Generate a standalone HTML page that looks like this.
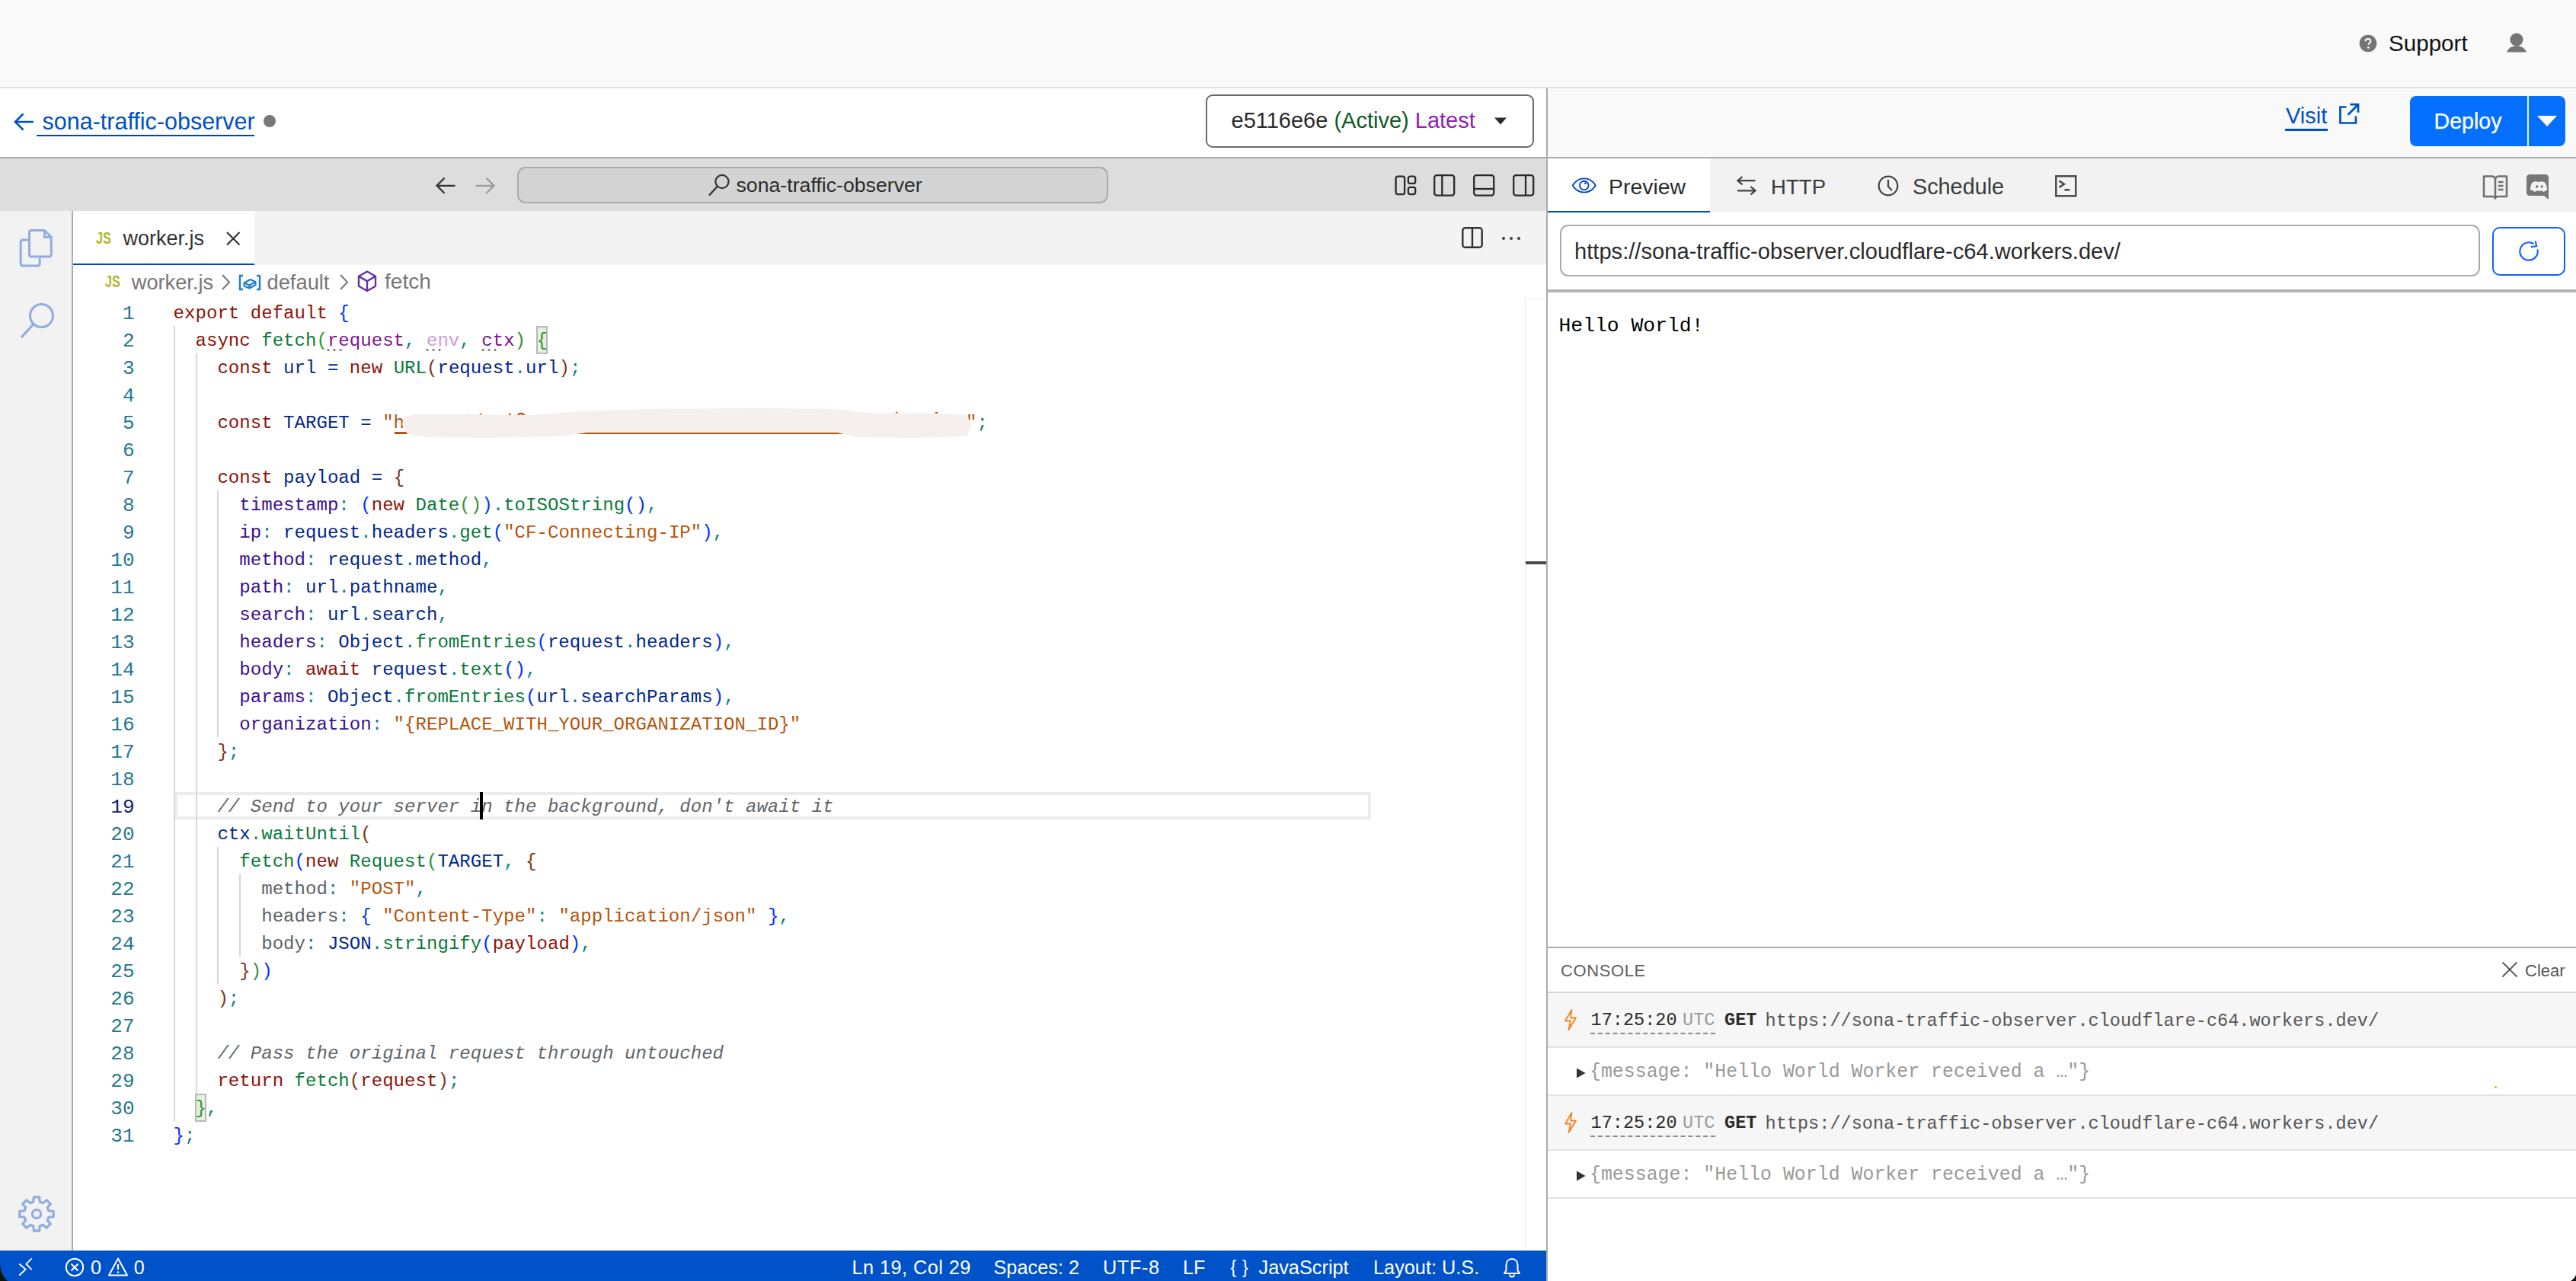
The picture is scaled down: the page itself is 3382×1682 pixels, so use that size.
<!DOCTYPE html>
<html><head><meta charset="utf-8"><title>Worker editor</title><style>
*{margin:0;padding:0;box-sizing:border-box}
html,body{width:3382px;height:1682px;overflow:hidden;background:#fff;font-family:"Liberation Sans",sans-serif;color:#2b2b2b}
.a{position:absolute}
.t1{position:absolute;white-space:pre}
svg{position:absolute;overflow:visible}
/* code */
.code{position:absolute;left:0;top:0;font-family:"Liberation Mono",monospace;font-size:24.08px;line-height:36px;white-space:pre}
.ln{position:absolute;width:60px;text-align:right;left:116.5px;font-family:"Liberation Mono",monospace;font-size:26px;line-height:36px;color:#237893}
.cl{position:absolute;left:227.6px;font-family:"Liberation Mono",monospace;font-size:24.08px;line-height:36px;white-space:pre;color:#00288c}
.k{color:#8c1408}.v{color:#00288c}.f{color:#0b7a3a}.pa{color:#7b158f}.pu{color:#cf9ad9}
.pr{color:#3b0f8f}.g{color:#5a6366}.s{color:#b3560c}.c{color:#5f6669;font-style:italic}
.p{color:#098186}.b1{color:#0431fa}.b2{color:#319331}.b3{color:#7b3814}
.guide{position:absolute;width:2px;background:#d8d8d8}
</style></head><body>
<div class="a" style="left:0px;top:0px;width:3382px;height:114px;background:#f9f9f9;"></div>
<div class="a" style="left:0px;top:114px;width:3382px;height:2px;background:#e0e0e0;"></div>
<svg style="left:3097px;top:45px;" width="24" height="24" viewBox="0 0 24 24"><circle cx="12" cy="12" r="11.3" fill="#757575"/><path d="M8.6 9.3c0-2 1.5-3.3 3.4-3.3s3.4 1.2 3.4 3c0 2.4-3 2.5-3 4.8" fill="none" stroke="#fff" stroke-width="2"/><circle cx="12.3" cy="17.4" r="1.3" fill="#fff"/></svg>
<div class="t1" style="left:3136.0px;top:41.9px;font-size:29.6px;line-height:29.6px;color:#111;font-family:'Liberation Sans',sans-serif;">Support</div>
<svg style="left:3290px;top:43px;" width="28" height="27" viewBox="0 0 28 27"><circle cx="14" cy="9" r="8.6" fill="#757575"/><path d="M1 25.6 C3 20 8 17.2 14 17.2 C20 17.2 25 20 27 25.6 Z" fill="#757575"/></svg>
<div class="a" style="left:0px;top:116px;width:2030px;height:90px;background:#ffffff;"></div>
<div class="a" style="left:2032px;top:116px;width:1350px;height:90px;background:#f9f9f9;"></div>
<svg style="left:17px;top:147px;" width="30" height="26" viewBox="0 0 30 26"><path d="M27 13H3.5M13.5 2.5L3 13l10.5 10.5" fill="none" stroke="#0051c3" stroke-width="2.6"/></svg>
<div class="t1" style="left:55.5px;top:144.2px;font-size:30.5px;line-height:30.5px;color:#0051c3;font-family:'Liberation Sans',sans-serif;">sona-traffic-observer</div>
<div class="a" style="left:48px;top:177px;width:286px;height:2px;background:#0341c0;"></div>
<svg style="left:345px;top:150px;" width="18" height="18" viewBox="0 0 18 18"><circle cx="9" cy="9" r="8" fill="#777"/></svg>
<div class="a" style="left:1583px;top:124px;width:431px;height:70px;border:2px solid #6b6b6b;border-radius:9px;background:#fff"></div>
<div class="t1" style="left:1616.5px;top:144.1px;font-size:29px;line-height:29px;color:#2b2b2b;font-family:'Liberation Sans',sans-serif;">e5116e6e <span style="color:#0e5a24">(Active)</span> <span style="color:#8e1eb5">Latest</span></div>
<svg style="left:1960px;top:153px;" width="20" height="12" viewBox="0 0 20 12"><path d="M2 1.5h16l-8 9z" fill="#2b2b2b"/></svg>
<div class="t1" style="left:3001.0px;top:137.5px;font-size:29px;line-height:29px;color:#0051c3;font-family:'Liberation Sans',sans-serif;">Visit</div>
<div class="a" style="left:3000px;top:169px;width:56px;height:3px;background:#0051c3;"></div>
<svg style="left:3068px;top:133px;" width="32" height="32" viewBox="0 0 32 32"><path d="M12.5 7.5H4.5V28.5H25V19.5M17.5 4.2H28V14.7M28 4.2L14.5 17.7" fill="none" stroke="#0051c3" stroke-width="2.7"/></svg>
<div class="a" style="left:3164px;top:126px;width:204px;height:66px;background:#0570ff;border-radius:8px"></div>
<div class="a" style="left:3318px;top:126px;width:2.4px;height:66px;background:#e9f1ff;"></div>
<div class="t1" style="left:3195.5px;top:145.3px;font-size:28.6px;line-height:28.6px;color:#ffffff;font-family:'Liberation Sans',sans-serif;-webkit-text-stroke:0.25px #fff;">Deploy</div>
<svg style="left:3329px;top:150px;" width="30" height="18" viewBox="0 0 30 18"><path d="M2 2h26l-13 14z" fill="#fff"/></svg>
<div class="a" style="left:0px;top:206px;width:2030px;height:2px;background:#a9a9a9;"></div>
<div class="a" style="left:0px;top:208px;width:2030px;height:69px;background:#dddddd;"></div>
<svg style="left:570px;top:231px;" width="30" height="26" viewBox="0 0 30 26"><path d="M27.5 12.8H5M13.5 2.8L3.5 12.8l10 10" fill="none" stroke="#333" stroke-width="2.3"/></svg>
<svg style="left:622px;top:231px;" width="30" height="26" viewBox="0 0 30 26"><path d="M2.5 12.8H25M16.5 2.8l10 10-10 10" fill="none" stroke="#9a9a9a" stroke-width="2.3"/></svg>
<div class="a" style="left:679px;top:219px;width:776px;height:48px;background:#d3d3d3;border:2px solid #ababab;border-radius:11px"></div>
<svg style="left:928px;top:227px;" width="32" height="32" viewBox="0 0 32 32"><circle cx="20" cy="11.5" r="8.6" fill="none" stroke="#333" stroke-width="2.2"/><path d="M14 17.5L3 29.5" stroke="#333" stroke-width="2.4"/></svg>
<div class="t1" style="left:966.5px;top:230.4px;font-size:26.7px;line-height:26.7px;color:#2b2b2b;font-family:'Liberation Sans',sans-serif;">sona-traffic-observer</div>
<svg style="left:1830px;top:229px;" width="30" height="28" viewBox="0 0 30 28"><rect x="2.6" y="2.6" width="11.5" height="23.5" rx="2.5" fill="none" stroke="#2b2b2b" stroke-width="2.3"/><rect x="18.9" y="2.6" width="9.3" height="9.3" rx="2.5" fill="none" stroke="#2b2b2b" stroke-width="2.3"/><rect x="18.9" y="16.8" width="9.3" height="9.3" rx="2.5" fill="none" stroke="#2b2b2b" stroke-width="2.3"/></svg>
<svg style="left:1881px;top:228px;" width="30" height="30" viewBox="0 0 30 30"><rect x="2.2" y="2.2" width="26" height="26.4" rx="3" fill="none" stroke="#2b2b2b" stroke-width="2.3"/><path d="M12.3 2v27" stroke="#2b2b2b" stroke-width="2.3"/></svg>
<svg style="left:1933px;top:228px;" width="30" height="30" viewBox="0 0 30 30"><rect x="2.2" y="2.2" width="26" height="26.4" rx="3" fill="none" stroke="#2b2b2b" stroke-width="2.3"/><path d="M2 20h27" stroke="#2b2b2b" stroke-width="2.3"/></svg>
<svg style="left:1985px;top:228px;" width="30" height="30" viewBox="0 0 30 30"><rect x="2.2" y="2.2" width="26" height="26.4" rx="3" fill="none" stroke="#2b2b2b" stroke-width="2.3"/><path d="M18 2v27" stroke="#2b2b2b" stroke-width="2.3"/></svg>
<div class="a" style="left:2032px;top:206px;width:1350px;height:2px;background:#ababab;"></div>
<div class="a" style="left:2032px;top:208px;width:1350px;height:71px;background:#f2f2f2;"></div>
<div class="a" style="left:2032px;top:208px;width:213px;height:69px;background:#ffffff;"></div>
<div class="a" style="left:2032px;top:277px;width:213px;height:2px;background:#0047c8;"></div>
<svg style="left:2062px;top:231px;" width="36" height="25" viewBox="0 0 36 25"><path d="M2.8 12.5C6.3 6.5 11.3 3.4 17.8 3.4S29.3 6.5 32.8 12.5C29.3 18.5 24.3 21.6 17.8 21.6S6.3 18.5 2.8 12.5Z" fill="none" stroke="#0047c8" stroke-width="1.9"/><circle cx="17.8" cy="12.5" r="5.8" fill="none" stroke="#0047c8" stroke-width="1.9"/><circle cx="19.4" cy="9.6" r="1.4" fill="#0047c8"/></svg>
<div class="t1" style="left:2112.0px;top:231.0px;font-size:28.4px;line-height:28.4px;color:#2b2b2b;font-family:'Liberation Sans',sans-serif;">Preview</div>
<svg style="left:2278px;top:230px;" width="30" height="28" viewBox="0 0 30 28"><path d="M26.5 7.2H4M9.5 2L3.5 7.2l6 5.2M3 20.3h23M20.5 15l6 5.3-6 5.2" fill="none" stroke="#444" stroke-width="2.3"/></svg>
<div class="t1" style="left:2325.0px;top:231.6px;font-size:27.6px;line-height:27.6px;color:#3b3b3b;font-family:'Liberation Sans',sans-serif;">HTTP</div>
<svg style="left:2464px;top:229px;" width="30" height="30" viewBox="0 0 30 30"><circle cx="15" cy="15" r="12.3" fill="none" stroke="#444" stroke-width="2.2"/><path d="M15 7v9l5 5" fill="none" stroke="#444" stroke-width="2.2"/></svg>
<div class="t1" style="left:2511.0px;top:230.6px;font-size:28.8px;line-height:28.8px;color:#3b3b3b;font-family:'Liberation Sans',sans-serif;">Schedule</div>
<svg style="left:2696px;top:228px;" width="32" height="32" viewBox="0 0 32 32"><rect x="3.3" y="3.3" width="26" height="26" fill="none" stroke="#444" stroke-width="2.4"/><path d="M7.5 9.5l6.5 4.3-6.5 4.3M14.5 21.3h6.8" fill="none" stroke="#444" stroke-width="2.4"/></svg>
<svg style="left:3258px;top:227px;" width="36" height="36" viewBox="0 0 36 36"><path d="M3 4.5h10c3 0 5 1.5 5 4.5 0-3 2-4.5 5-4.5h10V31H23c-3 0-5 1-5 2.5C18 32 16 31 13 31H3Z M18 9v24" fill="none" stroke="#707070" stroke-width="2.6" stroke-linejoin="round"/><path d="M22 12h6.6M22 17h6.6M22 22h6.6" stroke="#707070" stroke-width="2.6"/></svg>
<svg style="left:3315px;top:227px;" width="36" height="38" viewBox="0 0 36 38"><path d="M6 2h21c2.2 0 4 1.8 4 4v29l-6-5H6c-2.2 0-4-1.8-4-4V6c0-2.2 1.8-4 4-4Z" fill="#777"/><path d="M9.5 22.5c-0.2-3.8 0.8-7.2 2.8-10 1.8-0.9 3.6-1.4 5.4-1.5l0.5 1c1.5-0.2 3-0.2 4.5 0l0.5-1c1.8 0.1 3.6 0.6 5.4 1.5 2 2.8 3 6.2 2.8 10-1.5 1.2-3.2 2-5 2.5l-1.2-1.8c-2.6 0.7-5.4 0.7-8 0l-1.2 1.8c-1.8-0.5-3.5-1.3-5-2.5Z" fill="#f2f2f2" transform="translate(-2.5,0)"/><circle cx="15.8" cy="18" r="1.7" fill="#777"/><circle cx="22.2" cy="18" r="1.7" fill="#777"/></svg>
<div class="a" style="left:0px;top:277px;width:94px;height:1365px;background:#f2f2f2;"></div>
<div class="a" style="left:94px;top:277px;width:2px;height:1365px;background:#ababab;"></div>
<svg style="left:24px;top:299px;" width="46" height="54" viewBox="0 0 46 54"><path d="M14.5 16H6.2c-2 0-3 1-3 3v28c0 2 1 3 3 3h19c2 0 3-1 3-3v-7" fill="none" stroke="#92ace0" stroke-width="3"/><path d="M17.5 3.5h17l8.8 8.8V35c0 2-1 3-3 3H17.5c-2 0-3-1-3-3V6.5c0-2 1-3 3-3Z M34.5 3.5v9h8.8" fill="none" stroke="#92ace0" stroke-width="3" stroke-linejoin="round"/></svg>
<svg style="left:24px;top:394px;" width="48" height="54" viewBox="0 0 48 54"><circle cx="30.5" cy="20.5" r="15" fill="none" stroke="#92ace0" stroke-width="3"/><path d="M20 31.5L4 49" stroke="#92ace0" stroke-width="3.2"/></svg>
<svg style="left:22px;top:1568px;" width="52" height="52" viewBox="0 0 52 52"><path d="M22.48 3.78 L29.52 3.78 L30.27 10.06 L34.25 11.71 L39.23 7.80 L44.20 12.77 L40.29 17.75 L41.94 21.73 L48.22 22.48 L48.22 29.52 L41.94 30.27 L40.29 34.25 L44.20 39.23 L39.23 44.20 L34.25 40.29 L30.27 41.94 L29.52 48.22 L22.48 48.22 L21.73 41.94 L17.75 40.29 L12.77 44.20 L7.80 39.23 L11.71 34.25 L10.06 30.27 L3.78 29.52 L3.78 22.48 L10.06 21.73 L11.71 17.75 L7.80 12.77 L12.77 7.80 L17.75 11.71 L21.73 10.06 Z" fill="none" stroke="#92ace0" stroke-width="3.2" stroke-linejoin="miter"/><circle cx="26" cy="26" r="5.6" fill="none" stroke="#92ace0" stroke-width="3.2"/></svg>
<div class="a" style="left:96px;top:277px;width:1934px;height:71px;background:#f3f3f3;"></div>
<div class="a" style="left:96px;top:277px;width:238px;height:69px;background:#ffffff;"></div>
<div class="a" style="left:96px;top:346px;width:238px;height:2px;background:#0047c8;"></div>
<div class="t1" style="left:125.5px;top:302.4px;font-size:22px;line-height:22px;color:#b5b62f;font-family:'Liberation Sans',sans-serif;font-weight:bold;transform:scaleX(0.74);transform-origin:0 0;">JS</div>
<div class="t1" style="left:161.5px;top:299.5px;font-size:27px;line-height:27px;color:#333;font-family:'Liberation Sans',sans-serif;">worker.js</div>
<svg style="left:295px;top:302px;" width="22" height="22" viewBox="0 0 22 22"><path d="M3 3l16.5 16.5M19.5 3L3 19.5" stroke="#333" stroke-width="2.2"/></svg>
<svg style="left:1918px;top:297px;" width="30" height="30" viewBox="0 0 30 30"><rect x="2.3" y="2.3" width="25.4" height="25.4" rx="3.2" fill="none" stroke="#333" stroke-width="2.4"/><path d="M15 2v26" stroke="#333" stroke-width="2.4"/></svg>
<svg style="left:1968px;top:308px;" width="32" height="10" viewBox="0 0 32 10"><circle cx="6" cy="5" r="2.1" fill="#444"/><circle cx="16" cy="5" r="2.1" fill="#444"/><circle cx="26" cy="5" r="2.1" fill="#444"/></svg>
<div class="a" style="left:96px;top:348px;width:1934px;height:1294px;background:#ffffff;"></div>
<div class="t1" style="left:137.5px;top:359.4px;font-size:22px;line-height:22px;color:#b5b62f;font-family:'Liberation Sans',sans-serif;font-weight:bold;transform:scaleX(0.74);transform-origin:0 0;">JS</div>
<div class="t1" style="left:172.8px;top:357.0px;font-size:27.2px;line-height:27.2px;color:#777;font-family:'Liberation Sans',sans-serif;">worker.js</div>
<svg style="left:289px;top:359px;" width="16" height="23" viewBox="0 0 16 23"><path d="M3 2l9 9.5L3 21" fill="none" stroke="#777" stroke-width="2"/></svg>
<svg style="left:312px;top:360px;" width="32" height="22" viewBox="0 0 32 22"><path d="M7 2H3v18h4M25 2h4v18h-4" fill="none" stroke="#1a7fd4" stroke-width="2.4"/><path d="M8.5 11.5l8-4.5 7 3v4l-8 4.5-7-3Z M8.5 11.5l7 3v4M15.5 14.5l8-4.5" fill="none" stroke="#1a7fd4" stroke-width="2.2" stroke-linejoin="round"/></svg>
<div class="t1" style="left:350.5px;top:356.6px;font-size:27.3px;line-height:27.3px;color:#777;font-family:'Liberation Sans',sans-serif;">default</div>
<svg style="left:444px;top:359px;" width="16" height="23" viewBox="0 0 16 23"><path d="M3 2l9 9.5L3 21" fill="none" stroke="#777" stroke-width="2"/></svg>
<svg style="left:468px;top:354px;" width="28" height="31" viewBox="0 0 28 31"><path d="M14 2.5l11 6.3v13L14 28 3 21.8v-13Z M3 8.8l11 6.3 11-6.3 M14 15.1V28" fill="none" stroke="#6a2ea0" stroke-width="2.4" stroke-linejoin="round"/></svg>
<div class="t1" style="left:505.0px;top:356.2px;font-size:28.1px;line-height:28.1px;color:#777;font-family:'Liberation Sans',sans-serif;">fetch</div>
<div class="a" style="left:229px;top:1040px;width:1571px;height:36px;border:4px solid #ececec"></div>
<div class="guide" style="left:227.6px;top:428.0px;height:1044.0px"></div>
<div class="guide" style="left:256.5px;top:464.0px;height:972.0px"></div>
<div class="guide" style="left:285.4px;top:644.0px;height:324.0px"></div>
<div class="guide" style="left:285.4px;top:1112.0px;height:180.0px"></div>
<div class="guide" style="left:314.3px;top:1148.0px;height:108.0px"></div>
<div class="a" style="left:703.9px;top:428.0px;width:15px;height:37px;background:#e6eedf;border:2px solid #b9b9b9"></div>
<div class="a" style="left:256.0px;top:1436.0px;width:15px;height:37px;background:#e6eedf;border:2px solid #b9b9b9"></div>
<div class="ln" style="top:394.0px;color:#237893">1</div>
<div class="cl" style="top:394.0px"><span class="k">export</span> <span class="k">default</span> <span class="b1">{</span></div>
<div class="ln" style="top:430.0px;color:#237893">2</div>
<div class="cl" style="top:430.0px">  <span class="k">async</span> <span class="f">fetch</span><span class="b2">(</span><span class="pa">request</span><span class="p">,</span> <span class="pu">env</span><span class="p">,</span> <span class="pa">ctx</span><span class="b2">)</span> <span class="b2">{</span></div>
<div class="ln" style="top:466.0px;color:#237893">3</div>
<div class="cl" style="top:466.0px">    <span class="k">const</span> <span class="v">url</span> <span class="v">=</span> <span class="k">new</span> <span class="f">URL</span><span class="b3">(</span><span class="v">request</span><span class="p">.</span><span class="v">url</span><span class="b3">)</span><span class="p">;</span></div>
<div class="ln" style="top:502.0px;color:#237893">4</div>
<div class="cl" style="top:502.0px"></div>
<div class="ln" style="top:538.0px;color:#237893">5</div>
<div class="cl" style="top:538.0px">    <span class="k">const</span> <span class="v">TARGET</span> <span class="v">=</span> <span class="s">"h                                                   "</span><span class="p">;</span></div>
<div class="ln" style="top:574.0px;color:#237893">6</div>
<div class="cl" style="top:574.0px"></div>
<div class="ln" style="top:610.0px;color:#237893">7</div>
<div class="cl" style="top:610.0px">    <span class="k">const</span> <span class="v">payload</span> <span class="v">=</span> <span class="b3">{</span></div>
<div class="ln" style="top:646.0px;color:#237893">8</div>
<div class="cl" style="top:646.0px">      <span class="pr">timestamp</span><span class="p">:</span> <span class="b1">(</span><span class="k">new</span> <span class="f">Date</span><span class="b2">()</span><span class="b1">)</span><span class="p">.</span><span class="f">toISOString</span><span class="b1">()</span><span class="p">,</span></div>
<div class="ln" style="top:682.0px;color:#237893">9</div>
<div class="cl" style="top:682.0px">      <span class="pr">ip</span><span class="p">:</span> <span class="v">request</span><span class="p">.</span><span class="v">headers</span><span class="p">.</span><span class="f">get</span><span class="b1">(</span><span class="s">"CF-Connecting-IP"</span><span class="b1">)</span><span class="p">,</span></div>
<div class="ln" style="top:718.0px;color:#237893">10</div>
<div class="cl" style="top:718.0px">      <span class="pr">method</span><span class="p">:</span> <span class="v">request</span><span class="p">.</span><span class="v">method</span><span class="p">,</span></div>
<div class="ln" style="top:754.0px;color:#237893">11</div>
<div class="cl" style="top:754.0px">      <span class="pr">path</span><span class="p">:</span> <span class="v">url</span><span class="p">.</span><span class="v">pathname</span><span class="p">,</span></div>
<div class="ln" style="top:790.0px;color:#237893">12</div>
<div class="cl" style="top:790.0px">      <span class="pr">search</span><span class="p">:</span> <span class="v">url</span><span class="p">.</span><span class="v">search</span><span class="p">,</span></div>
<div class="ln" style="top:826.0px;color:#237893">13</div>
<div class="cl" style="top:826.0px">      <span class="pr">headers</span><span class="p">:</span> <span class="v">Object</span><span class="p">.</span><span class="f">fromEntries</span><span class="b1">(</span><span class="v">request</span><span class="p">.</span><span class="v">headers</span><span class="b1">)</span><span class="p">,</span></div>
<div class="ln" style="top:862.0px;color:#237893">14</div>
<div class="cl" style="top:862.0px">      <span class="pr">body</span><span class="p">:</span> <span class="k">await</span> <span class="v">request</span><span class="p">.</span><span class="f">text</span><span class="b1">()</span><span class="p">,</span></div>
<div class="ln" style="top:898.0px;color:#237893">15</div>
<div class="cl" style="top:898.0px">      <span class="pr">params</span><span class="p">:</span> <span class="v">Object</span><span class="p">.</span><span class="f">fromEntries</span><span class="b1">(</span><span class="v">url</span><span class="p">.</span><span class="v">searchParams</span><span class="b1">)</span><span class="p">,</span></div>
<div class="ln" style="top:934.0px;color:#237893">16</div>
<div class="cl" style="top:934.0px">      <span class="pr">organization</span><span class="p">:</span> <span class="s">"{REPLACE_WITH_YOUR_ORGANIZATION_ID}"</span></div>
<div class="ln" style="top:970.0px;color:#237893">17</div>
<div class="cl" style="top:970.0px">    <span class="b3">}</span><span class="p">;</span></div>
<div class="ln" style="top:1006.0px;color:#237893">18</div>
<div class="cl" style="top:1006.0px"></div>
<div class="ln" style="top:1042.0px;color:#0b216f">19</div>
<div class="cl" style="top:1042.0px">    <span class="c">// Send to your server in the background, don't await it</span></div>
<div class="ln" style="top:1078.0px;color:#237893">20</div>
<div class="cl" style="top:1078.0px">    <span class="v">ctx</span><span class="p">.</span><span class="f">waitUntil</span><span class="b3">(</span></div>
<div class="ln" style="top:1114.0px;color:#237893">21</div>
<div class="cl" style="top:1114.0px">      <span class="f">fetch</span><span class="b1">(</span><span class="k">new</span> <span class="f">Request</span><span class="b2">(</span><span class="v">TARGET</span><span class="p">,</span> <span class="b3">{</span></div>
<div class="ln" style="top:1150.0px;color:#237893">22</div>
<div class="cl" style="top:1150.0px">        <span class="g">method</span><span class="p">:</span> <span class="s">"POST"</span><span class="p">,</span></div>
<div class="ln" style="top:1186.0px;color:#237893">23</div>
<div class="cl" style="top:1186.0px">        <span class="g">headers</span><span class="p">:</span> <span class="b1">{</span> <span class="s">"Content-Type"</span><span class="p">:</span> <span class="s">"application/json"</span> <span class="b1">}</span><span class="p">,</span></div>
<div class="ln" style="top:1222.0px;color:#237893">24</div>
<div class="cl" style="top:1222.0px">        <span class="g">body</span><span class="p">:</span> <span class="v">JSON</span><span class="p">.</span><span class="f">stringify</span><span class="b1">(</span><span class="k">payload</span><span class="b1">)</span><span class="p">,</span></div>
<div class="ln" style="top:1258.0px;color:#237893">25</div>
<div class="cl" style="top:1258.0px">      <span class="b3">}</span><span class="b2">)</span><span class="b1">)</span></div>
<div class="ln" style="top:1294.0px;color:#237893">26</div>
<div class="cl" style="top:1294.0px">    <span class="b3">)</span><span class="p">;</span></div>
<div class="ln" style="top:1330.0px;color:#237893">27</div>
<div class="cl" style="top:1330.0px"></div>
<div class="ln" style="top:1366.0px;color:#237893">28</div>
<div class="cl" style="top:1366.0px">    <span class="c">// Pass the original request through untouched</span></div>
<div class="ln" style="top:1402.0px;color:#237893">29</div>
<div class="cl" style="top:1402.0px">    <span class="k">return</span> <span class="f">fetch</span><span class="b3">(</span><span class="k">request</span><span class="b3">)</span><span class="p">;</span></div>
<div class="ln" style="top:1438.0px;color:#237893">30</div>
<div class="cl" style="top:1438.0px">  <span class="b2">}</span><span class="p">,</span></div>
<div class="ln" style="top:1474.0px;color:#237893">31</div>
<div class="cl" style="top:1474.0px"><span class="b1">}</span><span class="p">;</span></div>
<svg style="left:429px;top:457px;" width="22" height="5" viewBox="0 0 22 5"><circle cx="2" cy="2.5" r="1.6" fill="#777"/><circle cx="10" cy="2.5" r="1.6" fill="#777"/><circle cx="18" cy="2.5" r="1.6" fill="#777"/></svg>
<svg style="left:559px;top:457px;" width="22" height="5" viewBox="0 0 22 5"><circle cx="2" cy="2.5" r="1.6" fill="#777"/><circle cx="10" cy="2.5" r="1.6" fill="#777"/><circle cx="18" cy="2.5" r="1.6" fill="#777"/></svg>
<svg style="left:632px;top:457px;" width="22" height="5" viewBox="0 0 22 5"><circle cx="2" cy="2.5" r="1.6" fill="#777"/><circle cx="10" cy="2.5" r="1.6" fill="#777"/><circle cx="18" cy="2.5" r="1.6" fill="#777"/></svg>
<div class="a" style="left:518px;top:567px;width:750px;height:2.5px;background:#b3560c;"></div>
<svg style="left:520px;top:530px;" width="760" height="50" viewBox="0 0 760 50"><rect x="93" y="14" width="4" height="2.5" fill="#b3560c"/><path d="M109 17l3-4" stroke="#b3560c" stroke-width="2.5"/><rect x="148" y="13" width="3" height="3" fill="#b3560c"/><path d="M159 17c1-3 3-4 5-4s4 1 5 4" fill="none" stroke="#b3560c" stroke-width="2.5"/><path d="M655 16l3-5" stroke="#b3560c" stroke-width="2.5"/><rect x="708" y="11" width="3" height="3" fill="#b3560c"/><path d="M10 27 L12 19 L25 16 L80 16 L180 17 L240 12 L330 9 L480 8 L575 9 L620 14 L720 15 L748 17 L753 28 L748 41 L680 43 L605 42 L580 36 L430 36 L250 36 L215 41 L120 43 L40 42 L16 38 Z" fill="#f5efee" stroke="#f5efee" stroke-width="4" stroke-linejoin="round"/></svg>
<div class="a" style="left:630px;top:1040px;width:4px;height:36px;background:#000;"></div>
<div class="a" style="left:2002px;top:392px;width:1px;height:1250px;background:#ececec;"></div>
<div class="a" style="left:2002px;top:392px;width:28px;height:1px;background:#ececec;"></div>
<div class="a" style="left:2003px;top:737px;width:27px;height:4px;background:#4a4a4a;"></div>
<div class="a" style="left:0px;top:1642px;width:2030px;height:40px;background:#0052c8;"></div>
<svg style="left:22px;top:1650px;" width="24" height="28" viewBox="0 0 24 28"><path d="M3.3 9.5l8.4 7.2-8.4 7.8M19.7 2.4l-7.3 7.3 7.3 7.5" fill="none" stroke="#fff" stroke-width="1.8"/></svg>
<svg style="left:84px;top:1650px;" width="28" height="28" viewBox="0 0 28 28"><circle cx="14" cy="14" r="11.2" fill="none" stroke="#fff" stroke-width="2"/><path d="M9.5 9.5l9 9M18.5 9.5l-9 9" stroke="#fff" stroke-width="2"/></svg>
<div class="t1" style="left:119.0px;top:1651.6px;font-size:25.3px;line-height:25.3px;color:#fff;font-family:'Liberation Sans',sans-serif;">0</div>
<svg style="left:141px;top:1650px;" width="28" height="28" viewBox="0 0 28 28"><path d="M14 2.5L26 24.5H2Z" fill="none" stroke="#fff" stroke-width="2" stroke-linejoin="round"/><path d="M14 10v7" stroke="#fff" stroke-width="2.2"/><circle cx="14" cy="20.5" r="1.3" fill="#fff"/></svg>
<div class="t1" style="left:175.8px;top:1651.6px;font-size:25.3px;line-height:25.3px;color:#fff;font-family:'Liberation Sans',sans-serif;">0</div>
<div class="t1" style="left:1118.5px;top:1651.6px;font-size:25.3px;line-height:25.3px;color:#fff;font-family:'Liberation Sans',sans-serif;letter-spacing:0.45px;">Ln 19, Col 29</div>
<div class="t1" style="left:1304.5px;top:1651.6px;font-size:25.3px;line-height:25.3px;color:#fff;font-family:'Liberation Sans',sans-serif;">Spaces: 2</div>
<div class="t1" style="left:1448.0px;top:1651.6px;font-size:25.3px;line-height:25.3px;color:#fff;font-family:'Liberation Sans',sans-serif;letter-spacing:0.6px;">UTF-8</div>
<div class="t1" style="left:1553.0px;top:1651.6px;font-size:25.3px;line-height:25.3px;color:#fff;font-family:'Liberation Sans',sans-serif;">LF</div>
<div class="t1" style="left:1615.5px;top:1652.5px;font-size:23px;line-height:23px;color:#fff;font-family:'Liberation Sans',sans-serif;letter-spacing:3px;">{&#8202;}</div>
<div class="t1" style="left:1652.5px;top:1651.6px;font-size:25.3px;line-height:25.3px;color:#fff;font-family:'Liberation Sans',sans-serif;">JavaScript</div>
<div class="t1" style="left:1803.0px;top:1651.6px;font-size:25.3px;line-height:25.3px;color:#fff;font-family:'Liberation Sans',sans-serif;">Layout: U.S.</div>
<svg style="left:1972px;top:1650px;" width="26" height="28" viewBox="0 0 26 28"><path d="M13 3c-4.5 0-7.5 3.3-7.5 8v7L3 22h20l-2.5-4v-7c0-4.7-3-8-7.5-8Z M10 23.5c0 2 1.3 3 3 3s3-1 3-3" fill="none" stroke="#fff" stroke-width="2" stroke-linejoin="round"/></svg>
<div class="a" style="left:2030px;top:116px;width:2px;height:1566px;background:#ababab;"></div>
<div class="a" style="left:2032px;top:279px;width:1350px;height:1403px;background:#ffffff;"></div>
<div class="a" style="left:2048px;top:295px;width:1208px;height:68px;border:2px solid #ababab;border-radius:11px;background:#fff"></div>
<div class="t1" style="left:2067.0px;top:315.8px;font-size:29.15px;line-height:29.15px;color:#2b2b2b;font-family:'Liberation Sans',sans-serif;">https://sona-traffic-observer.cloudflare-c64.workers.dev/</div>
<div class="a" style="left:3272px;top:298px;width:96px;height:64px;border:2.5px solid #0a62ff;border-radius:10px;background:#fff"></div>
<svg style="left:3304px;top:313px;" width="32" height="32" viewBox="0 0 32 32"><path d="M27.5 14.5A11.7 11.7 0 1 1 22.5 7.2" fill="none" stroke="#0a62ff" stroke-width="2.1"/><path d="M18.8 11.2L26.2 10.2L24.6 3.5" fill="none" stroke="#0a62ff" stroke-width="2.1"/></svg>
<div class="a" style="left:2032px;top:380px;width:1350px;height:4px;background:#b3b3b3;"></div>
<div class="t1" style="left:2046.5px;top:414.8px;font-size:26.4px;line-height:26.4px;color:#000;font-family:'Liberation Mono',monospace;">Hello World!</div>
<div class="a" style="left:2032px;top:1243px;width:1350px;height:2px;background:#ababab;"></div>
<div class="t1" style="left:2049.0px;top:1263.9px;font-size:22px;line-height:22px;color:#5f5f5f;font-family:'Liberation Sans',sans-serif;letter-spacing:0.6px;">CONSOLE</div>
<svg style="left:3283px;top:1261px;" width="24" height="24" viewBox="0 0 24 24"><path d="M2.5 2.5l19 19M21.5 2.5l-19 19" stroke="#555" stroke-width="1.9"/></svg>
<div class="t1" style="left:3315.0px;top:1263.9px;font-size:22px;line-height:22px;color:#555;font-family:'Liberation Sans',sans-serif;">Clear</div>
<div class="a" style="left:2032px;top:1302px;width:1350px;height:2px;background:#d6d6d6;"></div>
<div class="a" style="left:2032px;top:1304px;width:1350px;height:70px;background:#f6f6f6;"></div>
<div class="a" style="left:2032px;top:1374px;width:1350px;height:2px;background:#e3e3e3;"></div>
<svg style="left:2051px;top:1324px;" width="22" height="30" viewBox="0 0 22 30"><path d="M12.5 2L4 16.5h7L8.5 28 18 12.5h-7Z" fill="none" stroke="#f6821f" stroke-width="1.8" stroke-linejoin="round"/></svg>
<div class="t1" style="left:2088.5px;top:1328.0px;font-size:23.56px;line-height:23.56px;color:#2b2b2b;font-family:'Liberation Mono',monospace;">17:25:20</div>
<div class="a" style="left:2088px;top:1356px;width:164px;height:0;border-top:2px dashed #8a8a8a"></div>
<div class="t1" style="left:2209.0px;top:1328.0px;font-size:23.56px;line-height:23.56px;color:#999;font-family:'Liberation Mono',monospace;">UTC</div>
<div class="t1" style="left:2264.0px;top:1328.0px;font-size:23.56px;line-height:23.56px;color:#2b2b2b;font-family:'Liberation Mono',monospace;font-weight:bold;">GET</div>
<div class="t1" style="left:2317.6px;top:1329.0px;font-size:23.56px;line-height:23.56px;color:#555;font-family:'Liberation Mono',monospace;">https://sona-traffic-observer.cloudflare-c64.workers.dev/</div>
<div class="a" style="left:2032px;top:1376px;width:1350px;height:61px;background:#ffffff;"></div>
<div class="a" style="left:2032px;top:1437px;width:1350px;height:2px;background:#e3e3e3;"></div>
<svg style="left:2068px;top:1401px;" width="16" height="16" viewBox="0 0 16 16"><path d="M2 1.5l11.5 6.5L2 14.5Z" fill="#333"/></svg>
<div class="t1" style="left:2087.0px;top:1394.9px;font-size:24.9px;line-height:24.9px;color:#999;font-family:'Liberation Mono',monospace;">{message: "Hello World Worker received a …"}</div>
<div class="a" style="left:2032px;top:1439px;width:1350px;height:70px;background:#f6f6f6;"></div>
<div class="a" style="left:2032px;top:1509px;width:1350px;height:2px;background:#e3e3e3;"></div>
<svg style="left:2051px;top:1459px;" width="22" height="30" viewBox="0 0 22 30"><path d="M12.5 2L4 16.5h7L8.5 28 18 12.5h-7Z" fill="none" stroke="#f6821f" stroke-width="1.8" stroke-linejoin="round"/></svg>
<div class="t1" style="left:2088.5px;top:1463.0px;font-size:23.56px;line-height:23.56px;color:#2b2b2b;font-family:'Liberation Mono',monospace;">17:25:20</div>
<div class="a" style="left:2088px;top:1491px;width:164px;height:0;border-top:2px dashed #8a8a8a"></div>
<div class="t1" style="left:2209.0px;top:1463.0px;font-size:23.56px;line-height:23.56px;color:#999;font-family:'Liberation Mono',monospace;">UTC</div>
<div class="t1" style="left:2264.0px;top:1463.0px;font-size:23.56px;line-height:23.56px;color:#2b2b2b;font-family:'Liberation Mono',monospace;font-weight:bold;">GET</div>
<div class="t1" style="left:2317.6px;top:1464.0px;font-size:23.56px;line-height:23.56px;color:#555;font-family:'Liberation Mono',monospace;">https://sona-traffic-observer.cloudflare-c64.workers.dev/</div>
<div class="a" style="left:2032px;top:1511px;width:1350px;height:61px;background:#ffffff;"></div>
<div class="a" style="left:2032px;top:1572px;width:1350px;height:2px;background:#e3e3e3;"></div>
<svg style="left:2068px;top:1536px;" width="16" height="16" viewBox="0 0 16 16"><path d="M2 1.5l11.5 6.5L2 14.5Z" fill="#333"/></svg>
<div class="t1" style="left:2087.0px;top:1529.9px;font-size:24.9px;line-height:24.9px;color:#999;font-family:'Liberation Mono',monospace;">{message: "Hello World Worker received a …"}</div>
<svg style="left:3274px;top:1425px;" width="5" height="5" viewBox="0 0 5 5"><circle cx="2.5" cy="2.5" r="1.6" fill="#f6a623"/></svg>
<svg style="left:0px;top:1660px;" width="12" height="22" viewBox="0 0 12 22"><path d="M0 0V22H10C4 17 1 10 0 0Z" fill="#0b150b"/></svg>
<svg style="left:3374px;top:1674px;" width="8" height="8" viewBox="0 0 8 8"><path d="M8 0V8H1C4 6 6.5 3.5 8 0Z" fill="#0b150b"/></svg>
</body></html>
